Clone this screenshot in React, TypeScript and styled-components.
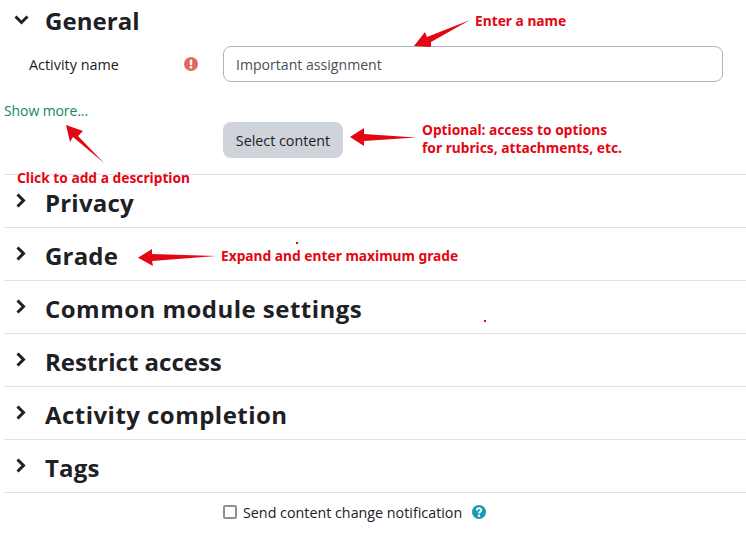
import styled, { createGlobalStyle } from "styled-components";

const GlobalStyle = createGlobalStyle`
  html, body {
    margin: 0;
    padding: 0;
    background: #fff;
  }
  body {
    font-family: "Open Sans", "Noto Sans", sans-serif;
    color: #1d2125;
  }
`;

const COLLAPSED = [
  { name: "Privacy", tracking: 0.2 },
  { name: "Grade", tracking: 0.2 },
  { name: "Common module settings", tracking: 0.47 },
  { name: "Restrict access", tracking: 0 },
  { name: "Activity completion", tracking: 0.46 },
  { name: "Tags", tracking: 0.2 },
];

const ChevronDown = () => (
  <svg width="15" height="10" viewBox="0 0 15 10">
    <path d="M1.5 1.5 L7.5 7.5 L13.5 1.5" fill="none" stroke="#1d2125" strokeWidth="3" />
  </svg>
);

const ChevronRight = () => (
  <svg width="11" height="15" viewBox="0 0 11 15">
    <path d="M1.5 1.5 L7.5 7.5 L1.5 13.5" fill="none" stroke="#1d2125" strokeWidth="3" />
  </svg>
);

const App = () => {
  return (
    <>
      <GlobalStyle />
      <Page>
        <GeneralSection>
          <SectionHeader>
            <ChevronSlot $lift={2}>
              <ChevronDown />
            </ChevronSlot>
            <SectionTitle $tracking={0.05}>General</SectionTitle>
          </SectionHeader>

          <FormRow>
            <FieldLabel>Activity name</FieldLabel>
            <RequiredIcon>
              <svg width="14" height="14" viewBox="0 0 14 14">
                <circle cx="7" cy="7" r="7" fill="#e2685d" />
                <rect x="5.8" y="2.6" width="2.4" height="5.6" rx="1" fill="#fff" />
                <circle cx="7" cy="10.3" r="1.3" fill="#fff" />
              </svg>
            </RequiredIcon>
            <NameInput readOnly value="Important assignment" />
          </FormRow>

          <ShowMore href="#">Show more...</ShowMore>

          <ButtonRow>
            <SelectButton>Select content</SelectButton>
          </ButtonRow>
        </GeneralSection>

        {COLLAPSED.map(({ name, tracking }) => (
          <CollapsedSection key={name}>
            <ChevronSlot $lift={6}>
              <ChevronRight />
            </ChevronSlot>
            <SectionTitle $tracking={tracking}>{name}</SectionTitle>
          </CollapsedSection>
        ))}

        <NotifyRow>
          <Checkbox />
          <NotifyText>Send content change notification</NotifyText>
          <svg width="14" height="14" viewBox="0 0 14 14">
            <circle cx="7" cy="7" r="7" fill="#1a9bb5" />
            <path
              d="M4.8 5.4 C4.8 2.6 9.3 2.6 9.3 5.2 C9.3 6.9 7 6.8 7 8.4"
              fill="none"
              stroke="#fff"
              strokeWidth="1.9"
            />
            <circle cx="7" cy="10.8" r="1.2" fill="#fff" />
          </svg>
        </NotifyRow>

        <Arrows width="746" height="537" viewBox="0 0 746 537">
          <polygon points="414,46 425,32 427,37 470,20 431,42 431,47" />
          <polygon points="350,137 364,128 364,134 416,137.5 364,141 364,146" />
          <polygon points="66,125 83,131 78,136 104,163 73,137 70,142" />
          <polygon points="138,257.7 152,249 152,254 216,256 152,261 153,266" />
          <rect x="296" y="242" width="2" height="2" />
          <rect x="484" y="320" width="2" height="2" />
        </Arrows>

        <Note $x={475} $y={12}>Enter a name</Note>
        <Note $x={422} $y={121}>
          Optional: access to options
          <br />
          for rubrics, attachments, etc.
        </Note>
        <Note $x={17} $y={169}>Click to add a description</Note>
        <Note $x={221} $y={247}>Expand and enter maximum grade</Note>
      </Page>
    </>
  );
};

export default App;

//STYLED

const Page = styled.div`
  position: relative;
  width: 746px;
  height: 537px;
  overflow: hidden;
  padding-left: 4px;
  box-sizing: border-box;
`;

const GeneralSection = styled.section`
  height: 175px;
  box-sizing: border-box;
  border-bottom: 1px solid #dee2e6;
`;

const SectionHeader = styled.div`
  display: flex;
  align-items: center;
  height: 42px;
`;

const ChevronSlot = styled.span<{ $lift: number }>`
  display: flex;
  justify-content: center;
  width: 35px;
  margin-bottom: ${(p) => p.$lift}px;
`;

const SectionTitle = styled.h3<{ $tracking: number }>`
  margin: 0 0 0 6px;
  font-size: 24px;
  line-height: 32px;
  font-weight: 700;
  letter-spacing: ${(p) => p.$tracking}px;
  color: #1d2125;
`;

const FormRow = styled.div`
  display: grid;
  grid-template-columns: 155px 39px 500px;
  align-items: center;
  height: 36px;
  margin-top: 4px;
  padding-left: 25px;
`;

const FieldLabel = styled.label`
  font-size: 14.4px;
  color: #1d2125;
`;

const RequiredIcon = styled.span`
  display: flex;
`;

const NameInput = styled.input`
  width: 500px;
  height: 36px;
  box-sizing: border-box;
  padding: 0 12px;
  border: 1px solid #adb5bd;
  border-radius: 8px;
  font-family: inherit;
  font-size: 14.1px;
  color: #495057;
  outline: none;
`;

const ShowMore = styled.a`
  display: block;
  margin-top: 19px;
  font-size: 14px;
  line-height: 20px;
  letter-spacing: -0.1px;
  color: #0f8a5f;
  text-decoration: none;
`;

const ButtonRow = styled.div`
  padding-left: 219px;
`;

const SelectButton = styled.button`
  display: block;
  width: 120px;
  height: 36px;
  margin-top: 1px;
  border: 0;
  border-radius: 8px;
  background: #ced4da;
  font-family: inherit;
  font-size: 14.3px;
  color: #1d2125;
`;

const CollapsedSection = styled.section`
  display: flex;
  align-items: center;
  height: 53px;
  box-sizing: border-box;
  border-bottom: 1px solid #dee2e6;
  padding-top: 4px;
`;

const NotifyRow = styled.div`
  display: flex;
  align-items: center;
  height: 40px;
  padding-left: 219px;
  padding-bottom: 2px;
  box-sizing: border-box;
`;

const Checkbox = styled.span`
  width: 14px;
  height: 14px;
  box-sizing: border-box;
  border: 2px solid #8f8f9d;
  border-radius: 2px;
`;

const NotifyText = styled.span`
  margin: 0 10px 0 6px;
  font-size: 14.3px;
  color: #1d2125;
`;

const Arrows = styled.svg`
  position: absolute;
  left: 0;
  top: 0;
  pointer-events: none;
  fill: #e30613;
`;

const Note = styled.div<{ $x: number; $y: number }>`
  position: absolute;
  left: ${(p) => p.$x}px;
  top: ${(p) => p.$y}px;
  font-family: "Noto Sans", "Open Sans", sans-serif;
  font-size: 13.77px;
  line-height: 18px;
  font-weight: 700;
  color: #e30613;
  white-space: nowrap;
`;
